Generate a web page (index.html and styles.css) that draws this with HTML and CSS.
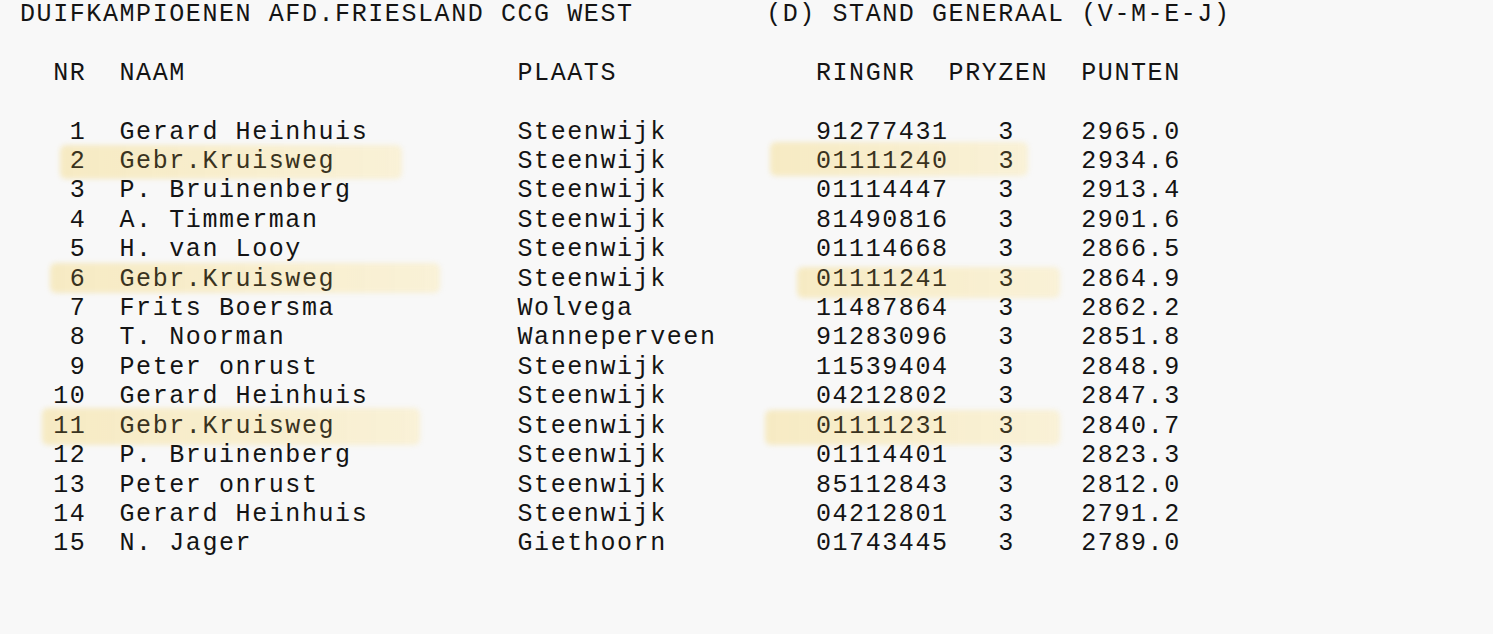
FILE: index.html
```html
<!DOCTYPE html>
<html lang="nl">
<head>
<meta charset="utf-8">
<title>Duifkampioenen</title>
<link rel="stylesheet" href="styles.css">
</head>
<body>
<pre class="sheet">DUIFKAMPIOENEN AFD.FRIESLAND CCG WEST        (D) STAND GENERAAL (V-M-E-J)

  NR  NAAM                    PLAATS            RINGNR  PRYZEN  PUNTEN

   1  Gerard Heinhuis         Steenwijk         91277431   3    2965.0
   <span class="hl hl-2a">2  Gebr.Kruisweg</span>           Steenwijk         <span class="hl hl-2b">01111240   3</span>    2934.6
   3  P. Bruinenberg          Steenwijk         01114447   3    2913.4
   4  A. Timmerman            Steenwijk         81490816   3    2901.6
   5  H. van Looy             Steenwijk         01114668   3    2866.5
   <span class="hl hl-6a">6  Gebr.Kruisweg</span>           Steenwijk         <span class="hl hl-6b">01111241   3</span>    2864.9
   7  Frits Boersma           Wolvega           11487864   3    2862.2
   8  T. Noorman              Wanneperveen      91283096   3    2851.8
   9  Peter onrust            Steenwijk         11539404   3    2848.9
  10  Gerard Heinhuis         Steenwijk         04212802   3    2847.3
  <span class="hl hl-11a">11  Gebr.Kruisweg</span>           Steenwijk         <span class="hl hl-11b">01111231   3</span>    2840.7
  12  P. Bruinenberg          Steenwijk         01114401   3    2823.3
  13  Peter onrust            Steenwijk         85112843   3    2812.0
  14  Gerard Heinhuis         Steenwijk         04212801   3    2791.2
  15  N. Jager                Giethoorn         01743445   3    2789.0
</pre>
</body>
</html>
```

FILE: styles.css
```css
html, body {
  margin: 0;
  padding: 0;
  background: #f8f8f8;
}

.sheet {
  position: relative;
  z-index: 0;
  margin: 0;
  padding: 0 20px;
  font-family: "Liberation Mono", "DejaVu Sans Mono", monospace;
  font-size: 25px;
  letter-spacing: 1.58px;
  line-height: 29.4px;
  color: #141414;
}

.hl {
  position: relative;
  color: #3a3320;
}

.hl::before {
  content: "";
  position: absolute;
  z-index: -1;
  background: linear-gradient(90deg, rgba(246, 232, 186, 0.85), rgba(249, 239, 206, 0.8));
  border-radius: 6px;
  filter: blur(2.5px);
}

.hl-2a::before { left: -10px; right: -67px; top: -2px; bottom: -3px; }
.hl-2b::before { left: -46px; right: -13px; top: -5px; bottom: 0px; }
.hl-6a::before { left: -20px; right: -105px; top: -2px; bottom: 1px; }
.hl-6b::before { left: -19px; right: -45px; top: 2px; bottom: -4px; }
.hl-11a::before { left: -11px; right: -85px; top: -4px; bottom: -4px; }
.hl-11b::before { left: -51px; right: -45px; top: -2px; bottom: -4px; }
```
